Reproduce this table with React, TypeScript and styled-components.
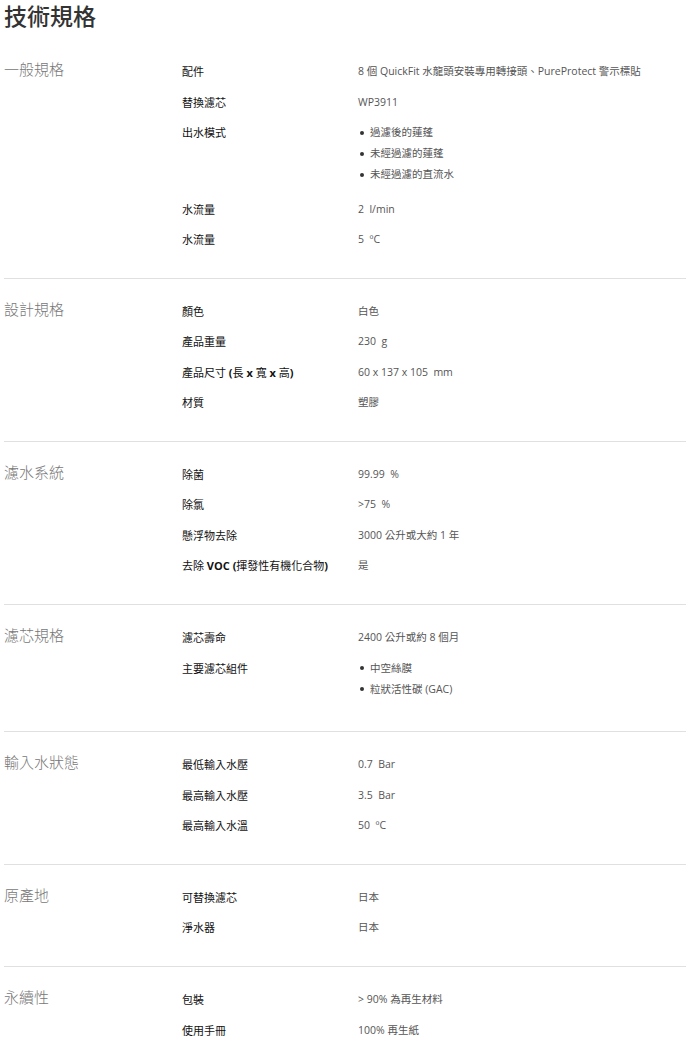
import React from "react";
import styled, { createGlobalStyle } from "styled-components";

type Spec = { label: React.ReactNode; value?: string; list?: string[] };
type Section = { title: string; rows: Spec[] };

const sections: Section[] = [
  {
    title: "一般規格",
    rows: [
      { label: "配件", value: "8 個 QuickFit 水龍頭安裝專用轉接頭、PureProtect 警示標貼" },
      { label: "替換濾芯", value: "WP3911" },
      { label: "出水模式", list: ["過濾後的蓮蓬", "未經過濾的蓮蓬", "未經過濾的直流水"] },
      { label: "水流量", value: "2  l/min" },
      { label: "水流量", value: "5  ºC" },
    ],
  },
  {
    title: "設計規格",
    rows: [
      { label: "顏色", value: "白色" },
      { label: "產品重量", value: "230  g" },
      { label: <>產品尺寸 <b>(</b>長 <b>x</b> 寬 <b>x</b> 高<b>)</b></>, value: "60 x 137 x 105  mm" },
      { label: "材質", value: "塑膠" },
    ],
  },
  {
    title: "濾水系統",
    rows: [
      { label: "除菌", value: "99.99  %" },
      { label: "除氯", value: ">75  %" },
      { label: "懸浮物去除", value: "3000 公升或大約 1 年" },
      { label: <>去除 <b>VOC (</b>揮發性有機化合物<b>)</b></>, value: "是" },
    ],
  },
  {
    title: "濾芯規格",
    rows: [
      { label: "濾芯壽命", value: "2400 公升或約 8 個月" },
      { label: "主要濾芯組件", list: ["中空絲膜", "粒狀活性碳 (GAC)"] },
    ],
  },
  {
    title: "輸入水狀態",
    rows: [
      { label: "最低輸入水壓", value: "0.7  Bar" },
      { label: "最高輸入水壓", value: "3.5  Bar" },
      { label: "最高輸入水溫", value: "50  ºC" },
    ],
  },
  {
    title: "原產地",
    rows: [
      { label: "可替換濾芯", value: "日本" },
      { label: "淨水器", value: "日本" },
    ],
  },
  {
    title: "永續性",
    rows: [
      { label: "包裝", value: "> 90% 為再生材料" },
      { label: "使用手冊", value: "100% 再生紙" },
    ],
  },
];

export default function App() {
  return (
    <>
      <GlobalStyle />
      <Page>
        <Heading>技術規格</Heading>
        {sections.map((s, i) => (
          <Block key={s.title} last={i === sections.length - 1}>
            <BlockTitle>{s.title}</BlockTitle>
            <Rows>
              {s.rows.map((r, j) => (
                <Row key={j}>
                  <Label>{r.label}</Label>
                  {r.list ? (
                    <Bullets>
                      {r.list.map((item) => (
                        <li key={item}>{item}</li>
                      ))}
                    </Bullets>
                  ) : (
                    <Value>{r.value}</Value>
                  )}
                </Row>
              ))}
            </Rows>
          </Block>
        ))}
      </Page>
    </>
  );
}

const GlobalStyle = createGlobalStyle`
  body {
    margin: 0;
    background: #fff;
    font-family: "Open Sans", "Noto Sans CJK TC", sans-serif;
  }
`;

const Page = styled.div`
  width: 682px;
  margin-left: 4px;
`;

const Heading = styled.h1`
  margin: 0;
  padding: 1px 0 8px;
  font-size: 23px;
  line-height: 30px;
  font-weight: 500;
  color: #333;
`;

const Block = styled.section<{ last?: boolean }>`
  display: flex;
  padding: 22px 0 18.2px;
  border-bottom: ${(p) => (p.last ? "none" : "1px solid #e0e0e0")};
`;

const BlockTitle = styled.div`
  width: 178px;
  flex-shrink: 0;
  font-size: 15px;
  line-height: 21px;
  font-weight: 300;
  color: #777;
  margin-top: -2px;
`;

const Rows = styled.div`
  flex: 1;
`;

const Row = styled.div`
  display: grid;
  grid-template-columns: 176px 1fr;
  margin-bottom: 9.5px;
  font-size: 11px;
  line-height: 21px;
`;

const Label = styled.div`
  color: #111;
  font-weight: 400;
  b {
    font-weight: 700;
  }
`;

const Value = styled.div`
  color: #555;
  font-size: 10.5px;
  white-space: pre-wrap;
`;

const Bullets = styled.ul`
  margin: 0 0 4px;
  padding: 0;
  list-style: none;
  color: #555;
  font-size: 10.5px;
  li {
    display: flex;
    align-items: center;
    line-height: 21px;
  }
  li::before {
    content: "";
    width: 4px;
    height: 4px;
    border-radius: 50%;
    background: #333;
    margin: 0 6px 0 2px;
  }
`;
